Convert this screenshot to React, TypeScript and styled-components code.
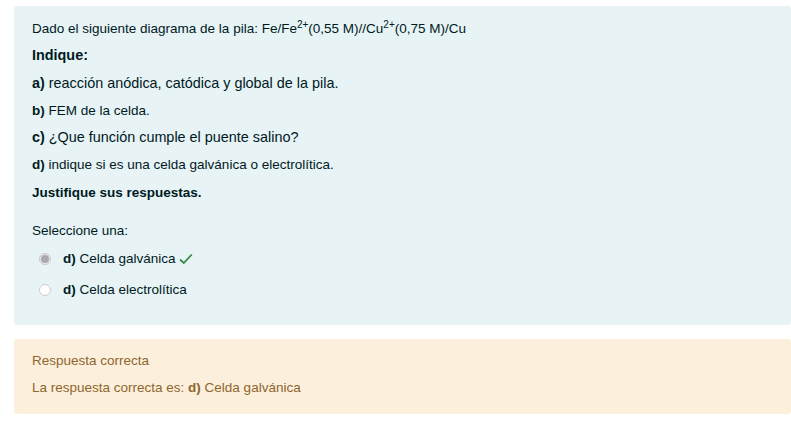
import React from "react";
import styled, { createGlobalStyle } from "styled-components";

const Global = createGlobalStyle`
  html, body { margin: 0; padding: 0; background: #ffffff; }
  body { font-family: "Liberation Sans", Arial, sans-serif; color: #1d2125; }
`;

const Page = styled.div`
  padding: 6px 0 0 14px;
  display: flex;
  flex-direction: column;
  gap: 14px;
`;

const Formulation = styled.div`
  background: #e7f3f5;
  border-radius: 3px;
  padding: 8.5px 18px 20px 18px;
  color: #001a1e;
`;

const Line = styled.div<{ $size?: number; $h?: number; $bold?: boolean }>`
  font-size: ${(p) => p.$size ?? 13.5}px;
  line-height: ${(p) => p.$h ?? 27}px;
  height: ${(p) => p.$h ?? 27}px;
  font-weight: ${(p) => (p.$bold ? 700 : 400)};
  white-space: nowrap;
`;

const Sup = styled.sup`
  font-size: 10px;
  line-height: 0;
  vertical-align: 0;
  position: relative;
  top: -5px;
`;

const Prompt = styled.div`
  margin-top: 14.5px;
  font-size: 13.5px;
  line-height: 20px;
`;

const Options = styled.div`
  margin-top: 2px;
  display: flex;
  flex-direction: column;
`;

const Option = styled.div`
  height: 31px;
  display: flex;
  align-items: center;
  padding-left: 7px;
  font-size: 13.5px;
  gap: 12px;
`;

const Radio = styled.span<{ $checked?: boolean }>`
  width: 12px;
  height: 12px;
  border-radius: 50%;
  box-sizing: border-box;
  border: 1px solid ${(p) => (p.$checked ? "#c6c6cc" : "#c9cdd1")};
  background: ${(p) => (p.$checked ? "#ececef" : "#ffffff")};
  display: flex;
  align-items: center;
  justify-content: center;
  &::after {
    content: "";
    display: ${(p) => (p.$checked ? "block" : "none")};
    width: 8px;
    height: 8px;
    border-radius: 50%;
    background: #a9a9b2;
  }
`;

const Label = styled.span`
  display: inline-flex;
  align-items: center;
  gap: 3px;
`;

const Outcome = styled.div`
  background: #fcefdc;
  border-radius: 3px;
  padding: 11.5px 18px 16.5px 18px;
  color: #8e662e;
  font-size: 13.5px;
  line-height: 20px;
  display: flex;
  flex-direction: column;
  gap: 7px;
`;

const Check = () => (
  <svg width="14" height="12" viewBox="0 0 14 12">
    <path d="M1 6.5 L4.8 10 L12.8 1.5" fill="none" stroke="#3a8a44" strokeWidth="1.8" />
  </svg>
);

export default function App() {
  return (
    <>
      <Global />
      <Page>
        <Formulation>
          <Line>
            Dado el siguiente diagrama de la pila: Fe/Fe<Sup>2+</Sup>(0,55 M)//Cu<Sup>2+</Sup>(0,75 M)/Cu
          </Line>
          <Line $size={14.4} $bold>Indique:</Line>
          <Line $size={14.4} $h={28}><b>a)</b> reacción anódica, catódica y global de la pila.</Line>
          <Line><b>b)</b> FEM de la celda.</Line>
          <Line $size={14.4}><b>c)</b> ¿Que función cumple el puente salino?</Line>
          <Line $h={28}><b>d)</b> indique si es una celda galvánica o electrolítica.</Line>
          <Line $h={28} $bold>Justifique sus respuestas.</Line>
          <Prompt>Seleccione una:</Prompt>
          <Options>
            <Option>
              <Radio $checked />
              <Label><span><b>d)</b> Celda galvánica</span><Check /></Label>
            </Option>
            <Option>
              <Radio />
              <Label><span><b>d)</b> Celda electrolítica</span></Label>
            </Option>
          </Options>
        </Formulation>
        <Outcome>
          <div>Respuesta correcta</div>
          <div>La respuesta correcta es: <b>d)</b> Celda galvánica</div>
        </Outcome>
      </Page>
    </>
  );
}
